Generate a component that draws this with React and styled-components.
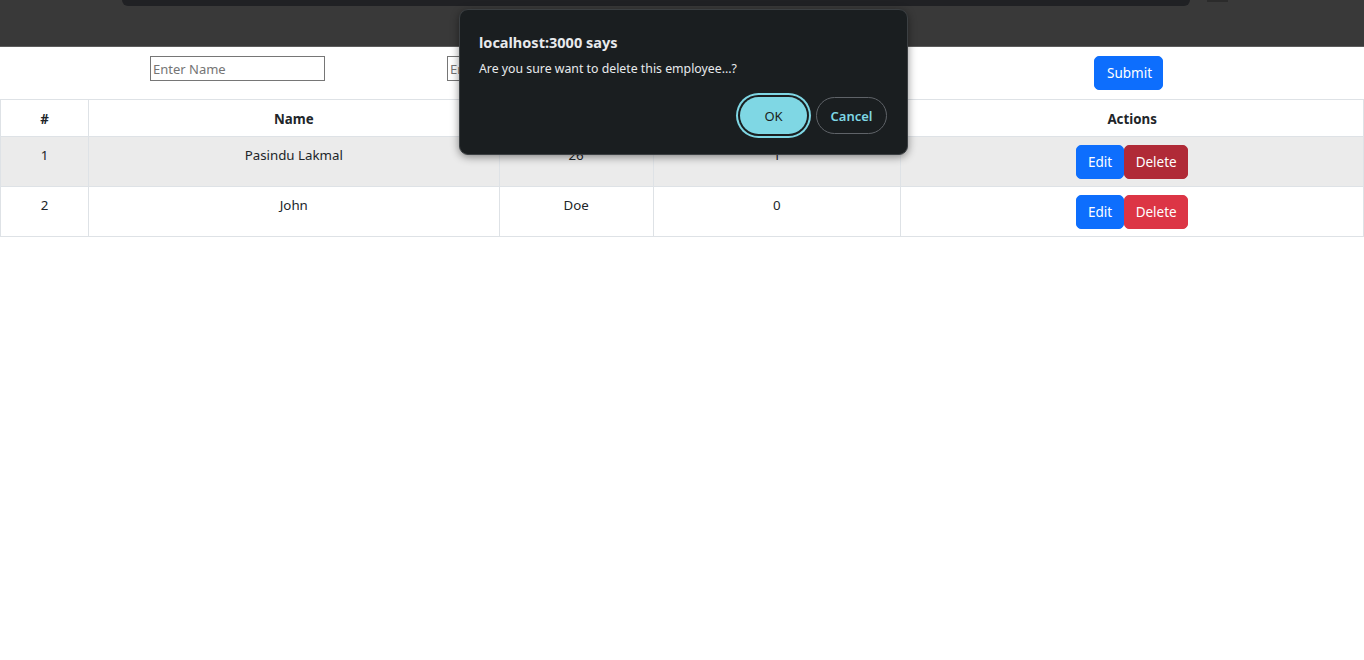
import React from "react";
import styled, { createGlobalStyle } from "styled-components";

const Global = createGlobalStyle`
  html, body { margin: 0; padding: 0; background: #fff; }
  body { font-family: "Noto Sans", "Open Sans", sans-serif; color: #212529; }
  * { box-sizing: border-box; }
`;

const Page = styled.div`
  position: relative;
  width: 1364px;
  min-height: 660px;
  background: #fff;
`;

const TopBand = styled.div`
  height: 47px;
  background: #393939;
  border-bottom: 1px solid #5c5c5c;
  display: flex;
  align-items: flex-start;
`;

const AddressBar = styled.div`
  margin-left: 122px;
  width: 1068px;
  height: 6px;
  background: #202124;
  border-radius: 0 0 12px 12px;
`;

const SmallTab = styled.div`
  margin-left: 17px;
  width: 21px;
  height: 2px;
  background: #2b2b2b;
`;

const Form = styled.form`
  display: flex;
  align-items: flex-start;
  padding: 9px 201px 9px 150px;
  gap: 122px;
`;

const Input = styled.input`
  width: ${(p) => p.$w || 175}px;
  height: 25px;
  border: 1px solid #767676;
  padding: 1px 2px;
  font-family: "Noto Sans", sans-serif;
  font-size: 13px;
  color: #000;
  &::placeholder { color: #757575; }
`;

const Btn = styled.button`
  height: 34px;
  padding: 0 12px;
  border: 1px solid ${(p) => p.$bg};
  background: ${(p) => p.$bg};
  color: #fff;
  font-family: "Noto Sans", sans-serif;
  font-size: 13.5px;
  border-radius: 5px;
  cursor: pointer;
  vertical-align: top;
`;

const SubmitBtn = styled(Btn)`
  margin-left: auto;
  width: 69px;
`;

const Table = styled.table`
  width: 100%;
  border-collapse: collapse;
  font-size: 13.3px;
  line-height: 21px;
  text-align: center;
`;

const Col = styled.col`
  width: ${(p) => p.$w}px;
`;

const Th = styled.th`
  border: 1px solid #dee2e6;
  padding: 8px 8px 6px;
  line-height: 22px;
  font-weight: 700;
  vertical-align: top;
`;

const Tr = styled.tr`
  background: ${(p) => (p.$shade ? "#ebebeb" : "#fff")};
`;

const Td = styled.td`
  border: 1px solid #dee2e6;
  padding: 8px 8px 7px;
  vertical-align: top;
`;

const ActionBtn = styled(Btn)`
  width: ${(p) => p.$w}px;
  padding: 0;
`;

const Dialog = styled.div`
  position: absolute;
  top: 9px;
  left: 459px;
  width: 449px;
  height: 146px;
  background: #1a1e20;
  border: 1px solid #3c4043;
  border-radius: 9px;
  box-shadow: 0 2px 8px rgba(0, 0, 0, 0.45);
  padding: 21px 20px 20px 19px;
  display: flex;
  flex-direction: column;
  font-family: "Noto Sans", sans-serif;
`;

const DialogTitle = styled.div`
  font-size: 14.5px;
  font-weight: 700;
  line-height: 22px;
  color: #e8eaed;
`;

const DialogMsg = styled.div`
  margin-top: 7px;
  font-size: 12.3px;
  line-height: 18px;
  color: #e8eaed;
`;

const DialogActions = styled.div`
  margin-top: auto;
  display: flex;
  justify-content: flex-end;
  gap: 9px;
`;

const PillBtn = styled.button`
  height: 37px;
  border-radius: 19px;
  font-family: "Noto Sans", sans-serif;
  font-size: 13px;
  font-weight: ${(p) => (p.$primary ? 400 : 600)};
  width: ${(p) => p.$w}px;
  background: ${(p) => (p.$primary ? "#7fd7e4" : "transparent")};
  color: ${(p) => (p.$primary ? "#1a1e20" : "#7fd7e4")};
  border: ${(p) => (p.$primary ? "none" : "1px solid #5f6368")};
  box-shadow: ${(p) =>
    p.$primary ? "0 0 0 2px #1a1e20, 0 0 0 4px #7fd7e4" : "none"};
`;

const rows = [
  { id: 1, name: "Pasindu Lakmal", a: "26", b: "1" },
  { id: 2, name: "John", a: "Doe", b: "0" },
];

export default function App() {
  return (
    <Page>
      <Global />
      <TopBand>
        <AddressBar />
        <SmallTab />
      </TopBand>
      <Form onSubmit={(e) => e.preventDefault()}>
        <Input placeholder="Enter Name" />
        <Input placeholder="Enter Age" />
        <Input placeholder="Enter Salary" $w={150} />
        <SubmitBtn type="submit" $bg="#0d6efd">Submit</SubmitBtn>
      </Form>
      <Table>
        <colgroup>
          <Col $w={88} />
          <Col $w={411} />
          <Col $w={154} />
          <Col $w={248} />
          <Col $w={463} />
        </colgroup>
        <thead>
          <tr>
            <Th>#</Th>
            <Th>Name</Th>
            <Th>Age</Th>
            <Th>Salary</Th>
            <Th>Actions</Th>
          </tr>
        </thead>
        <tbody>
          {rows.map((r, i) => (
            <Tr key={r.id} $shade={i === 0}>
              <Td>{r.id}</Td>
              <Td>{r.name}</Td>
              <Td>{r.a}</Td>
              <Td>{r.b}</Td>
              <Td>
                <ActionBtn $bg="#0d6efd" $w={48}>Edit</ActionBtn>
                <ActionBtn $bg={i === 0 ? "#b02a37" : "#dc3545"} $w={64}>
                  Delete
                </ActionBtn>
              </Td>
            </Tr>
          ))}
        </tbody>
      </Table>
      <Dialog role="dialog">
        <DialogTitle>localhost:3000 says</DialogTitle>
        <DialogMsg>Are you sure want to delete this employee...?</DialogMsg>
        <DialogActions>
          <PillBtn $primary $w={67}>OK</PillBtn>
          <PillBtn $w={71}>Cancel</PillBtn>
        </DialogActions>
      </Dialog>
    </Page>
  );
}
